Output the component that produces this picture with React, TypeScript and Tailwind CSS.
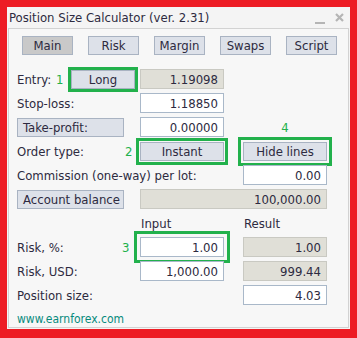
const font = { fontFamily: '"DejaVu Sans Condensed", "DejaVu Sans", sans-serif' };

function Btn({ label, w, pressed, left }: { label: string; w: string; pressed?: boolean; left?: boolean }) {
  return (
    <div
      className={`${w} h-[19px] flex items-center ${left ? "justify-start pl-[5px]" : "justify-center"} border ${
        pressed ? "bg-[#c9c9c9] border-[#a9b3c2]" : "bg-[#dde1e9] border-[#a9b3c2]"
      } text-[#2d2a40]`}
    >
      {label}
    </div>
  );
}

function Field({ value, w, gray }: { value: string; w: string; gray?: boolean }) {
  return (
    <div
      className={`${w} h-[20px] flex items-center justify-end pr-[5px] border ${
        gray ? "bg-[#e0dfd7] border-[#c9c9c2]" : "bg-white border-[#a9b8c9]"
      } text-[#2d2a40]`}
    >
      {value}
    </div>
  );
}

function Mark({ n }: { n: string }) {
  return <span className="text-[#22b14c] text-[13px]">{n}</span>;
}

export default function App() {
  return (
    <div
      className="w-[357px] h-[338px] bg-[#ed1c24] pl-[7px] pt-[7px] text-[13px] leading-none"
      style={font}
    >
      <div className="w-[343px] h-[322px] bg-[#f4f4f4] flex flex-col">
        {/* title bar */}
        <div className="h-[21px] flex items-center pl-[2px] pr-[6px] text-[#2d2a40]">
          <span className="text-[13px]">Position Size Calculator (ver. 2.31)</span>
          <div className="ml-auto flex items-end gap-[10px] h-[14px]">
            <div className="w-[10px] h-[2px] bg-[#b5b5b5] mb-[1px]" />
            <svg width="9" height="9" viewBox="0 0 9 9" className="mb-[3px]">
              <path d="M1 1 L8 8 M8 1 L1 8" stroke="#b5b5b5" strokeWidth="2.2" />
            </svg>
          </div>
        </div>

        {/* panel */}
        <div className="ml-[1px] w-[341px] h-[300px] border border-[#d2d2d2] bg-[#f7f7f7] pl-[8px] pt-[7px]">
          {/* tabs */}
          <div className="flex gap-[15px] pl-[5px]">
            <Btn label="Main" w="w-[51px]" pressed />
            <Btn label="Risk" w="w-[51px]" />
            <Btn label="Margin" w="w-[51px]" />
            <Btn label="Swaps" w="w-[51px]" />
            <Btn label="Script" w="w-[51px]" />
          </div>

          <div className="mt-[14px] flex flex-col gap-[4px] text-[#2d2a40]">
            {/* Entry */}
            <div className="flex items-center h-[20px]">
              <span className="w-[39px]">Entry:</span>
              <span className="w-[15px]">
                <Mark n="1" />
              </span>
              <div className="outline outline-[3px] outline-[#22b14c] outline-offset-[0px] mt-[1px]">
                <Btn label="Long" w="w-[64px]" />
              </div>
              <div className="w-[5px]" />
              <Field value="1.19098" w="w-[84px]" gray />
            </div>

            {/* Stop-loss */}
            <div className="flex items-center h-[20px]">
              <span className="w-[123px]">Stop-loss:</span>
              <Field value="1.18850" w="w-[84px]" />
            </div>

            {/* Take-profit */}
            <div className="flex items-center h-[20px]">
              <Btn label="Take-profit:" w="w-[107px]" left />
              <div className="w-[16px]" />
              <Field value="0.00000" w="w-[84px]" />
              <div className="w-[19px]" />
              <div className="w-[84px] flex justify-center">
                <Mark n="4" />
              </div>
            </div>

            {/* Order type */}
            <div className="flex items-center h-[20px]">
              <span className="w-[108px]">Order type:</span>
              <span className="w-[15px]">
                <Mark n="2" />
              </span>
              <div className="outline outline-[3px] outline-[#22b14c] outline-offset-[1px]">
                <Btn label="Instant" w="w-[84px]" />
              </div>
              <div className="w-[19px]" />
              <div className="outline outline-[3px] outline-[#22b14c] outline-offset-[2px]">
                <Btn label="Hide lines" w="w-[84px]" />
              </div>
            </div>

            {/* Commission */}
            <div className="flex items-center h-[20px]">
              <span className="w-[226px]">Commission (one-way) per lot:</span>
              <Field value="0.00" w="w-[84px]" />
            </div>

            {/* Account balance */}
            <div className="flex items-center h-[20px]">
              <Btn label="Account balance" w="w-[107px]" left />
              <div className="w-[16px]" />
              <Field value="100,000.00" w="w-[187px]" gray />
            </div>

            {/* headers */}
            <div className="flex items-center h-[20px]">
              <span className="w-[124px]" />
              <span className="w-[103px]">Input</span>
              <span>Result</span>
            </div>

            {/* Risk % */}
            <div className="flex items-center h-[20px]">
              <span className="w-[105px]">Risk, %:</span>
              <span className="w-[18px]">
                <Mark n="3" />
              </span>
              <div className="outline outline-[3px] outline-[#22b14c] outline-offset-[3px]">
                <Field value="1.00" w="w-[84px]" />
              </div>
              <div className="w-[19px]" />
              <Field value="1.00" w="w-[84px]" gray />
            </div>

            {/* Risk USD */}
            <div className="flex items-center h-[20px]">
              <span className="w-[123px]">Risk, USD:</span>
              <Field value="1,000.00" w="w-[84px]" />
              <div className="w-[19px]" />
              <Field value="999.44" w="w-[84px]" gray />
            </div>

            {/* Position size */}
            <div className="flex items-center h-[20px]">
              <span className="w-[226px]">Position size:</span>
              <Field value="4.03" w="w-[84px]" />
            </div>

            <div className="flex items-center h-[20px] text-[#078a7c] text-[12px]">
              www.earnforex.com
            </div>
          </div>
        </div>
      </div>
    </div>
  );
}
